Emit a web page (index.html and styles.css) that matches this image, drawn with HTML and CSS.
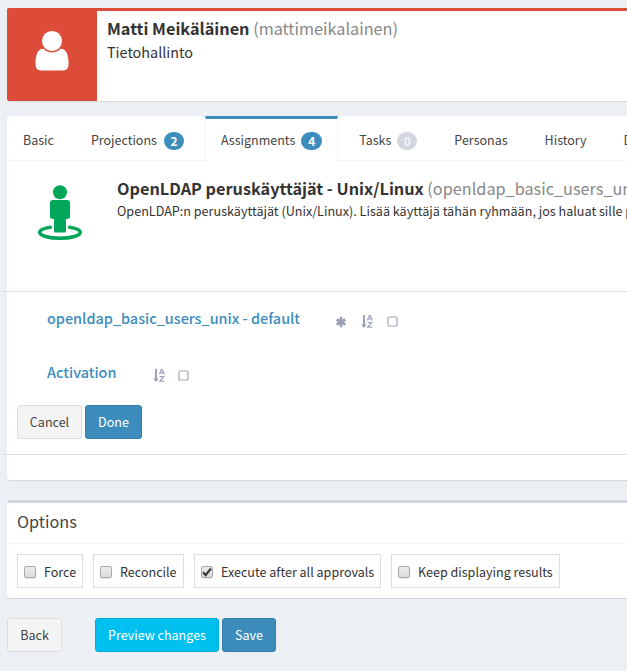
FILE: index.html
```html
<!DOCTYPE html>
<html lang="fi">
<head>
<meta charset="utf-8">
<title>Matti Meikäläinen</title>
<link rel="stylesheet" href="styles.css">
</head>
<body>
<svg class="defs" width="0" height="0">
  <symbol id="sort" viewBox="0 0 12 13">
    <path d="M2 0h2v9.5h1.6L3 13 .2 9.5H2z"/>
    <path class="line" d="M6.3 5.5 8.3.7h1l2 4.8M7.2 3.8h3.2M6.7 7.6h4L6.7 12.1h4.4"/>
  </symbol>
  <symbol id="square" viewBox="0 0 11 11">
    <rect class="line" x="1" y="1" width="9" height="9" rx="1.3"/>
  </symbol>
  <symbol id="asterisk" viewBox="0 0 12 12">
    <path class="star" d="M6 .8v10.4M1.6 3.5l8.8 5M10.4 3.5l-8.8 5"/>
  </symbol>
</svg>
<div class="page">
  <header class="summary">
    <div class="avatar">
      <svg width="34" height="41" viewBox="0 0 34 41"><path d="M8.500 18.700Q12 22.500 17 22.500T25.500 18.700C31.500 18.700 33.600 25 33.600 33.500Q33.600 40.500 28 40.500H6Q.500 40.500.500 33.500C.500 25 2.500 18.700 8.500 18.700Z"/><circle cx="17" cy="11" r="10.500"/></svg>
    </div>
    <div class="summary-text">
      <div class="name"><b>Matti Meikäläinen</b> <span>(mattimeikalainen)</span></div>
      <div class="org">Tietohallinto</div>
    </div>
  </header>

  <section class="tabs-panel">
    <nav class="tabs">
      <a class="tab">Basic</a>
      <a class="tab">Projections<i class="badge">2</i></a>
      <a class="tab active">Assignments<i class="badge">4</i></a>
      <a class="tab">Tasks<i class="badge muted">0</i></a>
      <a class="tab">Personas</a>
      <a class="tab">History</a>
      <a class="tab">Delegations</a>
    </nav>
    <div class="role">
      <svg class="role-icon" width="46" height="56" viewBox="0 0 46 56">
        <circle cx="23" cy="7.300" r="7"/>
        <path d="M16 15h14q3 0 3 3V31.500q0 2.500-3 2.500h-1V46q0 1.500-1.500 1.500h-9Q17 47.500 17 46V34h-1Q13 34 13 31.500V18q0-3 3-3Z"/>
        <path class="ring" d="M13.300 42.200C7 43.200 2.700 45 2.700 47.300c0 3.300 9 6 20.300 6s20.300-2.700 20.300-6c0-2.300-4.300-4.100-10.600-5.100"/>
      </svg>
      <div class="role-text">
        <div class="name"><b>OpenLDAP peruskäyttäjät - Unix/Linux</b> <span>(openldap_basic_users_unix)</span></div>
        <div class="desc">OpenLDAP:n peruskäyttäjät (Unix/Linux). Lisää käyttäjä tähän ryhmään, jos haluat sille pääsyn</div>
      </div>
    </div>
    <div class="details">
      <div class="prop"><a class="construction">openldap_basic_users_unix - default</a>
        <svg class="i-star" width="12" height="12"><use href="#asterisk"/></svg>
        <svg class="i-sort" width="12" height="13"><use href="#sort"/></svg>
        <svg class="i-square" width="11" height="11"><use href="#square"/></svg>
      </div>
      <div class="prop second"><a class="activation">Activation</a>
        <svg class="i-sort" width="12" height="13"><use href="#sort"/></svg>
        <svg class="i-square" width="11" height="11"><use href="#square"/></svg>
      </div>
      <div class="actions">
        <button class="btn cancel">Cancel</button>
        <button class="btn primary done">Done</button>
      </div>
    </div>
  </section>

  <section class="options">
    <h3>Options</h3>
    <div class="checks">
      <label class="force"><i class="box"></i>Force</label>
      <label class="reconcile"><i class="box"></i>Reconcile</label>
      <label class="execute"><i class="box"><svg width="10" height="10" viewBox="0 0 10 10"><path d="M1 5.300 3.700 8 9 1.500"/></svg></i>Execute after all approvals</label>
      <label class="keep"><i class="box"></i>Keep displaying results</label>
    </div>
  </section>

  <footer class="footer">
    <button class="btn back">Back</button>
    <button class="btn info preview">Preview changes</button>
    <button class="btn primary save">Save</button>
  </footer>
</div>
</body>
</html>
```
FILE: styles.css
```css
* { box-sizing: border-box; }
html, body { margin: 0; overflow: hidden; background: #ecf0f5; }
body {
  height: 671px;
  color: #333;
  font: 12.550px/20px "Source Sans Pro", "Noto Sans CJK JP", sans-serif;
  white-space: nowrap;
}
.defs { display: block; position: absolute; }
.page { width: 760px; padding: 8px 7px; }
.summary {
  display: flex;
  height: 93px;
  background: #fff;
  border-top: 3px solid #dd4b39;
  border-radius: 3px;
  box-shadow: 0 1px 1px rgba(0,0,0,.1);
}
.avatar {
  width: 90px;
  height: 93px;
  margin-top: -3px;
  padding: 22px 0 0 28px;
  background: #dd4b39;
  border-radius: 2px 0 0 2px;
}
.avatar svg { fill: #fff; display: block; }
.avatar circle { stroke: #dd4b39; stroke-width: 1; }
.summary-text { padding: 5px 0 0 10px; }
.name { height: 25px; line-height: 25px; font-size: 16.260px; }
.name span { color: #888; }
.org { line-height: 22px; font-size: 14.400px; }

.tabs-panel {
  height: 364px;
  margin-top: 15px;
  background: #fff;
  border-radius: 3px;
  box-shadow: 0 1px 1px rgba(0,0,0,.1);
}
.tabs { display: flex; gap: 5px; height: 45px; border-bottom: 1px solid #f4f4f4; }
.tab {
  display: flex;
  align-items: center;
  height: 45px;
  padding: 3px 15px 0;
  border: solid transparent;
  border-width: 0 1px;
  color: #444;
  font-size: 12.510px;
}
.tab.active {
  padding-top: 0;
  background: #fff;
  border-top: 3px solid #3c8dbc;
  border-left-color: #f4f4f4;
  border-right-color: #f4f4f4;
}
.badge {
  display: block;
  height: 18px;
  min-width: 20px;
  margin: 1px 0 0 7px;
  border-radius: 10px;
  background: #3c8dbc;
  color: #fff;
  font: bold 12px/18px "Noto Sans CJK JP", sans-serif;
  text-align: center;
}
.active .badge { min-width: 21px; margin-left: 6px; }
.badge.muted { background: #d2d6de; color: #f4f5f8; margin-left: 6px; }
.role { display: flex; height: 130px; }
.role-icon { margin: 24px 34px 0 30px; fill: #00a65a; flex: none; }
.ring { fill: none; stroke: #00a65a; stroke-width: 3.600; stroke-linecap: round; }
.role-text { padding: 15px 0 0; }
.role-text .name { line-height: 25px; }
.desc { font-size: 12.600px; line-height: 20px; }
.details {
  height: 164px;
  margin: 0 -5px;
  padding: 16px 15px 0;
  border: solid #dbdfe2;
  border-width: 1px 0;
}
.prop { display: flex; height: 20px; padding-left: 30px; color: #9c9fb5; fill: currentColor; }
.prop.second { margin-top: 34px; }
.prop a { font-size: 14.430px; font-weight: 500; color: #3c8dbc; line-height: 20px; flex: none; }
.construction { width: 288px; }
.activation { width: 106px; }
.prop svg { flex: none; }
.line { fill: none; stroke: #a0a3bb; stroke-width: 1.200; }
.star { fill: none; stroke: #9a9fb5; stroke-width: 2.700; }
.i-star { margin-top: 8px; }
.i-sort { margin: 7px 0 0 14px; }
.second .i-sort { margin-left: 0; }
.i-square { margin: 8px 0 0 14px; }
.second .i-square { margin-left: 13px; }
.actions { display: flex; gap: 3px; margin-top: 23px; }
.btn {
  height: 34px;
  padding: 0;
  border: 1px solid #ddd;
  border-radius: 3px;
  background: #f4f4f4;
  color: #444;
  font: inherit;
}
.btn.primary { background: #3c8dbc; border-color: #367fa9; color: #fff; }
.btn.info { background: #00c0ef; border-color: #00acd6; color: #fff; }
.cancel { width: 65px; }
.done { width: 57px; }

.options {
  height: 98px;
  margin-top: 20px;
  background: #fff;
  border-top: 3px solid #d2d6de;
  border-radius: 3px;
  box-shadow: 0 1px 1px rgba(0,0,0,.1);
}
h3 {
  height: 41px;
  margin: 0;
  padding-left: 10px;
  border-bottom: 1px solid #f4f4f4;
  color: #444;
  font-size: 16.240px;
  font-weight: 400;
  line-height: 37px;
}
.checks { display: flex; gap: 10px; padding: 10px; }
.checks label { display: flex; align-items: center; height: 34px; padding: 2px 0 0 6px; border: 1px solid #ddd; }
.force { width: 66px; }
.reconcile { width: 91px; }
.execute { width: 187px; }
.keep { width: 169px; }
.box {
  width: 12px;
  height: 12px;
  margin: 0 8px 0 0;
  border: 1px solid #a9a9a9;
  border-radius: 2px;
  background: linear-gradient(#ececec, #dcdcdc);
  box-shadow: 0 1px 1px rgba(0,0,0,.1);
}
.box svg { display: block; fill: none; stroke: #3e3e3e; stroke-width: 2.200; }
.footer { display: flex; margin-top: 20px; }
.back { width: 55px; margin-right: 33px; }
.preview { width: 124px; margin-right: 3px; }
.save { width: 54px; }
```
